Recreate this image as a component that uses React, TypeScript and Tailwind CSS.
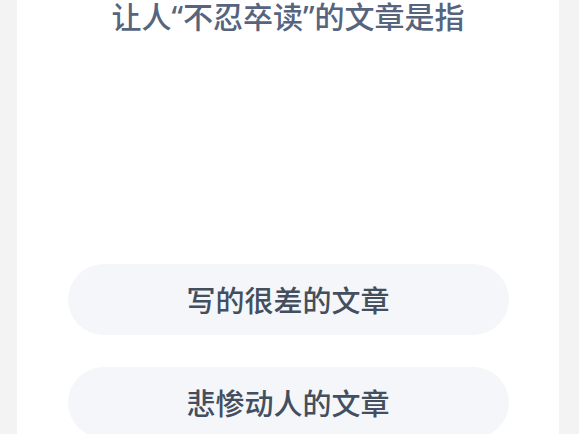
const options = ["写的很差的文章", "悲惨动人的文章"];

export default function App() {
  return (
    <div className="h-[434px] overflow-hidden bg-[#f3f3f3] px-[17px] font-['Noto_Sans_CJK_SC','Noto_Sans',sans-serif]">
      <div className="flex h-full w-[542px] flex-col items-center bg-white">
        <h1 className="mt-[-4px] h-[38px] text-[30px] leading-[38px] font-medium text-[#56647d]">
          让人<span className="font-['Noto_Sans',sans-serif]">“</span>不忍卒读
          <span className="font-['Noto_Sans',sans-serif]">”</span>的文章是指
        </h1>
        <div className="mt-[230px] flex flex-col gap-[32px]">
          {options.map((o) => (
            <div
              key={o}
              className="flex h-[71px] w-[441px] items-center justify-center rounded-full bg-[#f4f6f9] text-[29px] font-medium text-[#434e5e]"
            >
              {o}
            </div>
          ))}
        </div>
      </div>
    </div>
  );
}
